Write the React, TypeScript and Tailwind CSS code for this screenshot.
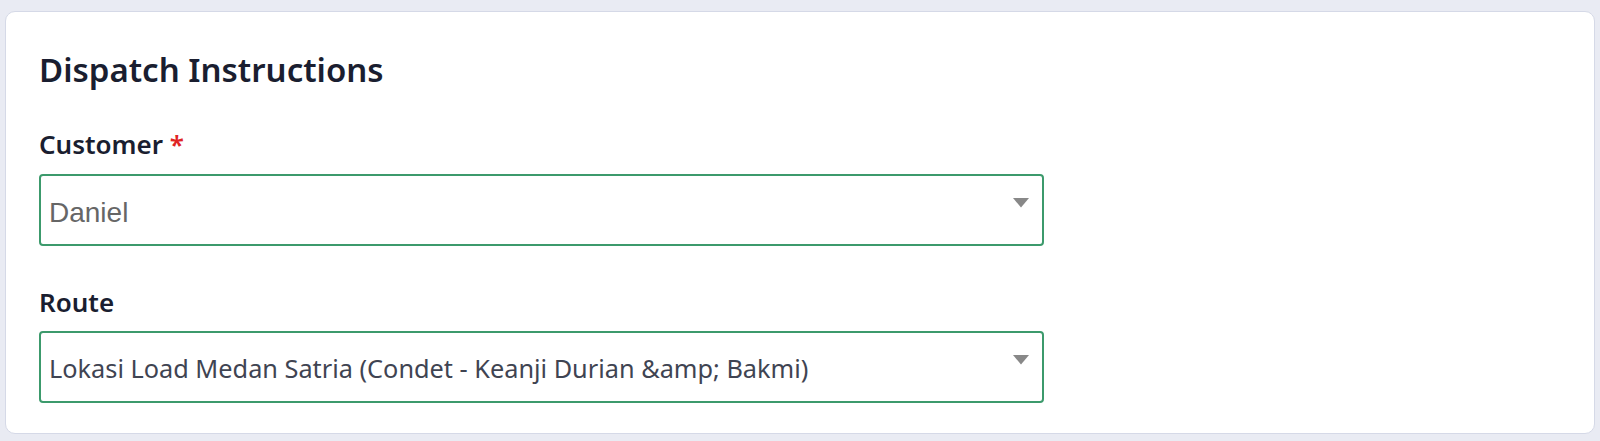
import React from "react";

function Caret() {
  return (
    <svg width="16" height="10" viewBox="0 0 16 10" className="shrink-0">
      <path d="M0 0 L16 0 L8 9.5 Z" fill="#888888" />
    </svg>
  );
}

export default function App() {
  return (
    <div className="h-[441px] w-[1600px] overflow-hidden bg-[#e9ebf3] px-[5px] pt-[11px]" style={{ fontFamily: '"Noto Sans", "Open Sans", sans-serif' }}>
      <div className="h-[423px] rounded-[10px] border border-[#d5d9e7] bg-white pl-[33px] pt-[38px]">
        <h2 className="text-[33px] font-semibold leading-[40px] text-[#1a1e30]">Dispatch Instructions</h2>

        <div className="mt-[38px] text-[26px] font-semibold leading-[32px] text-[#1a1e30]">
          Customer <span className="text-[#e02424]">*</span>
        </div>
        <div className="mt-[14px] flex h-[72px] w-[1005px] items-center rounded-[4px] border-2 border-[#3c9a6c] pl-[8px] pr-[13px]">
          <span className="flex-1 pt-[6px] text-[28px] text-[#666666]" style={{ fontFamily: '"Liberation Sans", Arial, sans-serif' }}>Daniel</span>
          <div className="-mt-[14px]"><Caret /></div>
        </div>

        <div className="mt-[40px] text-[26px] font-semibold leading-[32px] text-[#1a1e30]">Route</div>
        <div className="mt-[13px] flex h-[72px] w-[1005px] items-center rounded-[4px] border-2 border-[#3c9a6c] pl-[8px] pr-[13px]">
          <span className="flex-1 pt-[4px] text-[25.3px] text-[#3f4452]">Lokasi Load Medan Satria (Condet - Keanji Durian &amp;amp; Bakmi)</span>
          <div className="-mt-[14px]"><Caret /></div>
        </div>
      </div>
    </div>
  );
}
